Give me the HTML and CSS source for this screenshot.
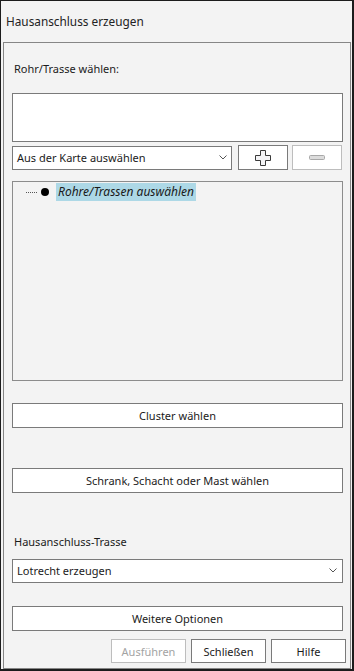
FILE: index.html
```html
<!DOCTYPE html>
<html lang="de">
<head>
<meta charset="utf-8">
<title>Hausanschluss erzeugen</title>
<link rel="stylesheet" href="styles.css">
</head>
<body>
<div class="window">
  <div class="titlebar">Hausanschluss erzeugen</div>
  <div class="panel">
    <div class="label label-top">Rohr/Trasse wählen:</div>
    <div class="textbox"></div>
    <div class="pick-row">
      <div class="select select-map">
        <span class="select-text">Aus der Karte auswählen</span>
        <svg class="chevron" width="8" height="5" viewBox="0 0 8 5"><path d="M0.5 0.5 L4 4 L7.5 0.5" fill="none" stroke="#555" stroke-width="1"/></svg>
      </div>
      <button class="btn btn-icon btn-add">
        <svg width="16" height="16" viewBox="0 0 16 16"><path d="M5.5 0.5 H10.5 V5.5 H15.5 V10.5 H10.5 V15.5 H5.5 V10.5 H0.5 V5.5 H5.5 Z" fill="#f4f4f6" stroke="#3a3a3a" stroke-width="1" stroke-linejoin="round"/></svg>
      </button>
      <button class="btn btn-icon btn-remove" disabled>
        <svg width="16" height="5" viewBox="0 0 16 5"><rect x="0.5" y="0.5" width="15" height="4" rx="1" fill="#dcdcdc" stroke="#a8a8a8" stroke-width="1"/></svg>
      </button>
    </div>
    <div class="tree">
      <div class="node">
        <span class="node-line"></span>
        <span class="node-bullet"></span>
        <span class="node-text">Rohre/Trassen auswählen</span>
      </div>
    </div>
    <button class="btn btn-wide btn-cluster">Cluster wählen</button>
    <button class="btn btn-wide btn-schrank">Schrank, Schacht oder Mast wählen</button>
    <div class="label label-trasse">Hausanschluss-Trasse</div>
    <div class="select select-trasse">
      <span class="select-text">Lotrecht erzeugen</span>
      <svg class="chevron" width="8" height="5" viewBox="0 0 8 5"><path d="M0.5 0.5 L4 4 L7.5 0.5" fill="none" stroke="#555" stroke-width="1"/></svg>
    </div>
    <button class="btn btn-wide btn-more">Weitere Optionen</button>
    <div class="actions">
      <button class="btn btn-action" disabled>Ausführen</button>
      <button class="btn btn-action">Schließen</button>
      <button class="btn btn-action">Hilfe</button>
    </div>
  </div>
</div>
</body>
</html>
```
FILE: styles.css
```css
html, body {
  margin: 0;
  padding: 0;
  background: #f3f3f3;
}

body {
  font-family: "Noto Sans", "Open Sans", sans-serif;
  font-size: 11px;
  color: #1b1b1b;
}

.window {
  width: 354px;
  height: 671px;
  box-sizing: border-box;
  border-style: solid;
  border-color: #1c1c1c;
  border-width: 1px 2px 2px 1px;
  background: #f3f3f3;
  display: flex;
  flex-direction: column;
}

.titlebar {
  height: 41px;
  box-sizing: border-box;
  flex: none;
  display: flex;
  align-items: center;
  padding: 0 0 1px 5px;
  font-size: 11.8px;
  color: #222;
}

.panel {
  flex: 1;
  margin: 0 1px 0 2px;
  border: 1px solid #868686;
  padding: 0 7px 0 8px;
  display: flex;
  flex-direction: column;
}

.label {
  height: 16px;
  line-height: 16px;
  padding-left: 2px;
}

.label-top {
  margin-top: 18px;
}

.textbox {
  margin-top: 16px;
  height: 49px;
  box-sizing: border-box;
  border: 1px solid #7a7a7a;
  background: #fff;
}

.pick-row {
  margin-top: 3px;
  height: 25px;
  display: flex;
  align-items: flex-end;
}

.select {
  box-sizing: border-box;
  height: 24px;
  border: 1px solid #7a7a7a;
  background: #fff;
  display: flex;
  align-items: center;
  padding: 0 4px 1px 4px;
}

.select-map {
  width: 220px;
}

.select-text {
  flex: 1;
  white-space: nowrap;
}

.chevron {
  display: block;
  flex: none;
}

.select-trasse {
  margin-top: 9px;
  padding-right: 5px;
}

.btn {
  font: inherit;
  color: #1b1b1b;
  background: #fff;
  border: 1px solid #7a7a7a;
  border-radius: 0;
  margin: 0;
  padding: 0;
  box-sizing: border-box;
  display: flex;
  align-items: center;
  justify-content: center;
}

.btn:disabled {
  color: #a3a3a3;
  border-color: #bdbdbd;
}

.btn-icon {
  width: 50px;
  height: 25px;
  align-self: stretch;
}

.btn-add {
  margin-left: 6px;
}

.btn-remove {
  margin-left: 4px;
}

.btn-icon svg {
  display: block;
}

.tree {
  margin-top: 11px;
  height: 200px;
  box-sizing: border-box;
  border: 1px solid #8c8c8c;
  padding: 1px 0 0 13px;
}

.node {
  display: flex;
  align-items: center;
  height: 18px;
}

.node-line {
  width: 11px;
  border-top: 1px dotted #555;
  margin-top: 1px;
}

.node-bullet {
  width: 8px;
  height: 8px;
  border-radius: 50%;
  background: #000;
  margin-left: 4px;
}

.node-text {
  margin-left: 7px;
  height: 18px;
  line-height: 18px;
  padding: 0 2px;
  background: #add8e6;
  font-style: italic;
  color: #1a1a1a;
  font-size: 12px;
}

.btn-wide {
  width: 100%;
  height: 25px;
}

.btn-cluster {
  margin-top: 22px;
}

.btn-schrank {
  margin-top: 40px;
}

.label-trasse {
  margin-top: 41px;
}

.btn-more {
  margin-top: 23px;
}

.actions {
  margin-top: 8px;
  margin-right: -3px;
  display: flex;
  justify-content: flex-end;
  gap: 5px;
}

.btn-action {
  width: 75px;
  height: 24px;
}
```
